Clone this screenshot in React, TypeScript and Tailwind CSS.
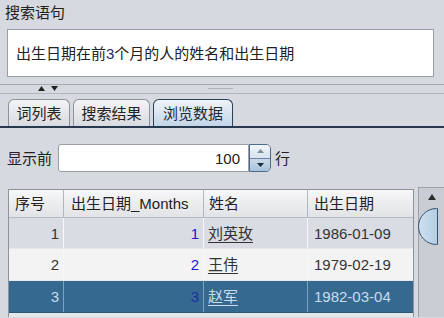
import React from "react";

const FONT = "font-['Liberation_Sans','Noto_Sans_CJK_SC',sans-serif]";

const rows = [
  { no: 1, m: 1, name: "刘英玫", date: "1986-01-09" },
  { no: 2, m: 2, name: "王伟", date: "1979-02-19" },
  { no: 3, m: 3, name: "赵军", date: "1982-03-04" },
];

function Tab({ label, active, w }: { label: string; active?: boolean; w: string }) {
  return (
    <div
      className={`${w} h-[27px] flex items-center justify-center rounded-t-[6px] border border-b-0 text-[15px] leading-none mr-[3px] ${
        active
          ? "bg-gradient-to-b from-[#eef3f8] to-[#c3d6e8] border-[#2a3e55] text-[#1c2a38]"
          : "bg-gradient-to-b from-[#f4f4f6] to-[#d9dbe0] border-[#8d929a] text-[#222]"
      }`}
    >
      {label}
    </div>
  );
}

export default function App() {
  return (
    <div className={`w-[444px] h-[318px] overflow-hidden bg-[#d6d9df] text-[#222] ${FONT}`}>
      {/* search statement */}
      <div className="pl-[5px] pt-[3px] h-[29px] text-[15px] leading-[20px]">搜索语句</div>
      <div className="ml-[7px] w-[427px] h-[48px] bg-white border border-[#9a9ea6] flex items-center pl-[8px] text-[15px] leading-none">
        出生日期在前<span className="text-[#1e2a60]">3</span>个月的人的姓名和出生日期
      </div>

      {/* splitter */}
      <div className="mt-[7px] h-[10px] border-t border-[#a7abb2] border-b border-b-[#b3b7bd] relative">
        <div className="absolute left-[38px] top-[1px] flex gap-[6px]">
          <svg width="7" height="5" viewBox="0 0 7 5">
            <path d="M0 5 L3.5 0 L7 5 Z" fill="#222" />
          </svg>
          <svg width="7" height="5" viewBox="0 0 7 5">
            <path d="M0 0 L3.5 5 L7 0 Z" fill="#222" />
          </svg>
        </div>
        <div className="absolute left-[208px] top-[3px] w-[25px] h-[1px] bg-[#b0b4ba]" />
      </div>

      {/* tabs */}
      <div className="mt-[5px] pl-[8px] flex items-end border-b-2 border-[#26394f]">
        <Tab label="词列表" w="w-[62px]" />
        <Tab label="搜索结果" w="w-[77px]" />
        <Tab label="浏览数据" w="w-[80px]" active />
      </div>

      {/* show first N rows */}
      <div className="mt-[16px] flex items-center h-[28px]">
        <span className="pl-[7px] w-[58px] text-[15px] leading-none">显示前</span>
        <div className="w-[191px] h-[28px] bg-white border border-[#9a9ea6] rounded-l-[3px] flex items-center justify-end pr-[8px] text-[15px] leading-none">
          100
        </div>
        <div className="w-[22px] h-[28px] flex flex-col border border-[#4d6a88] rounded-r-[5px] overflow-hidden">
          <div className="flex-1 bg-gradient-to-b from-[#f2f6fa] to-[#d6e2ee] flex items-center justify-center border-b border-[#6d86a0]">
            <svg width="7" height="4" viewBox="0 0 7 4">
              <path d="M0 4 L3.5 0 L7 4 Z" fill="#7c8c9c" />
            </svg>
          </div>
          <div className="flex-1 bg-gradient-to-b from-[#c9d9ea] to-[#a9c2da] flex items-center justify-center">
            <svg width="7" height="4" viewBox="0 0 7 4">
              <path d="M0 0 L3.5 4 L7 0 Z" fill="#1c2a3a" />
            </svg>
          </div>
        </div>
        <span className="ml-[4px] text-[15px] leading-none">行</span>
      </div>

      {/* table + scrollbar */}
      <div className="mt-[17px] flex">
        <div className="ml-[8px] w-[406px] border border-[#8e939b] border-b-0 bg-[#e4e6ea] text-[15px] leading-none">
          <div className="flex h-[28px] bg-gradient-to-b from-[#f7f7f8] to-[#e1e3e6] border-b border-[#b8bcc2]">
            <div className="w-[55px] pl-[6px] flex items-center border-r border-[#b3b7bd]">序号</div>
            <div className="w-[140px] pl-[7px] flex items-center border-r border-[#b3b7bd]">出生日期_Months</div>
            <div className="w-[104px] pl-[5px] flex items-center border-r border-[#b3b7bd]">姓名</div>
            <div className="flex-1 pl-[6px] flex items-center">出生日期</div>
          </div>
          {rows.map((r, i) => {
            const sel = i === 2;
            const bg = sel ? "bg-[#35698f]" : i === 0 ? "bg-[#d9dce3]" : "bg-[#f3f3f4]";
            const txt = sel ? "text-[#c9dcee]" : "text-[#333]";
            const line = sel ? "border-[#7ea3c2]" : "border-[#f8f8fa]";
            return (
              <div key={r.no} className={`flex ${i === 0 ? "h-[31px]" : "h-[32px]"} ${bg} ${txt} border-b ${sel ? "border-[#2a5677]" : "border-[#e6e8ec]"}`}>
                <div className={`w-[55px] pr-[4px] flex items-center justify-end border-r ${line}`}>{r.no}</div>
                <div className={`w-[140px] pr-[4px] flex items-center justify-end border-r ${line} ${sel ? "text-[#1c2f9a]" : "text-[#1a1ad0]"}`}>
                  {r.m}
                </div>
                <div className={`w-[104px] pl-[4px] flex items-center border-r ${line}`}>
                  <span className="underline underline-offset-[3px]">{r.name}</span>
                </div>
                <div className="flex-1 pl-[6px] flex items-center">{r.date}</div>
              </div>
            );
          })}
        </div>
        <div className="ml-[4px] w-[26px] h-[130px] -mt-[2px] border-l border-t border-[#9ea3aa] bg-[#c9cdd3] flex flex-col">
          <div className="h-[17px] flex items-center justify-center pl-[1px]">
            <svg width="8" height="6" viewBox="0 0 8 6">
              <path d="M0 6 L4 0 L8 6 Z" fill="#2a2a2a" />
            </svg>
          </div>
          <div className="mt-[3px] w-[20px] h-[37px] -ml-[1px] rounded-l-full border border-[#39526b] bg-gradient-to-r from-[#cfe0ef] to-[#b4cde4]" />
        </div>
      </div>
    </div>
  );
}
